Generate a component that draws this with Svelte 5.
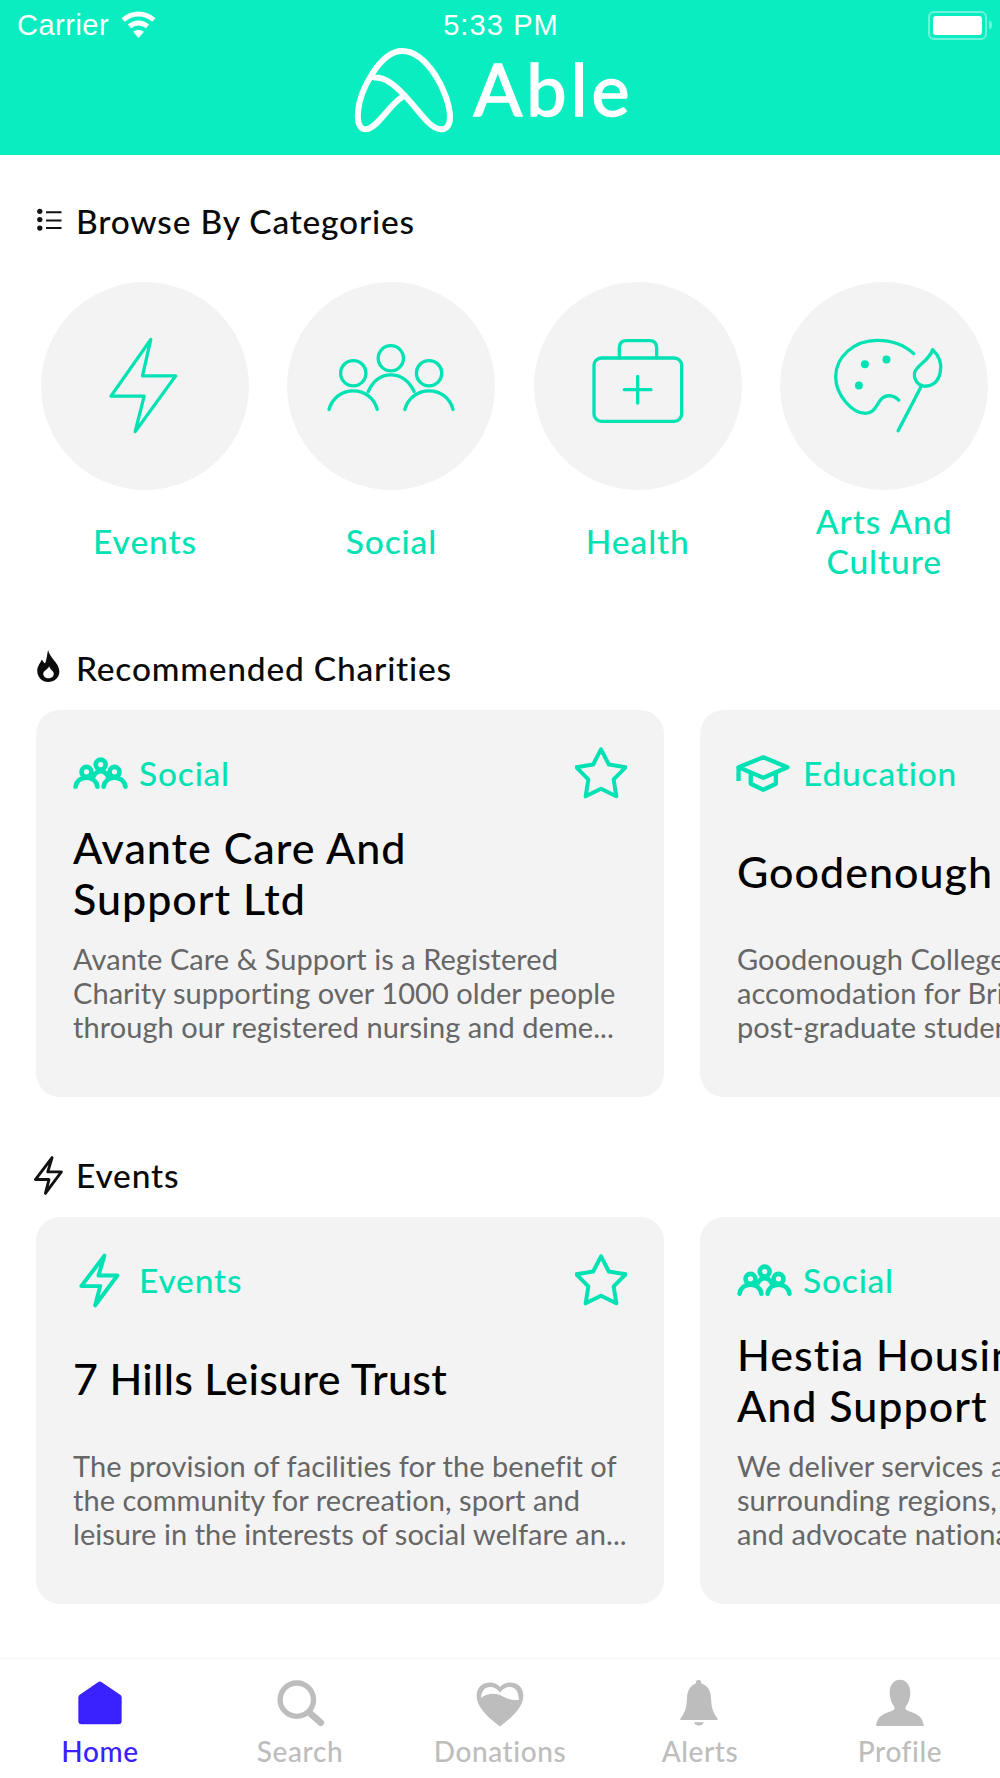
<script>
  const categories = [
    { label: 'Events', icon: 'bolt' },
    { label: 'Social', icon: 'people' },
    { label: 'Health', icon: 'kit' },
    { label: 'Arts And Culture', icon: 'palette' }
  ];
  const sections = [
    {
      title: 'Recommended Charities', icon: 'flame',
      cards: [
        { tag: 'Social', tagIcon: 'people', name: ['Avante Care And', 'Support Ltd'],
          lines: ['Avante Care & Support is a Registered', 'Charity supporting over 1000 older people', 'through our registered nursing and deme...'] },
        { tag: 'Education', tagIcon: 'cap', name: ['Goodenough College'],
          lines: ['Goodenough College provides', 'accomodation for British and overseas', 'post-graduate students in London'] }
      ]
    },
    {
      title: 'Events', icon: 'bolt',
      cards: [
        { tag: 'Events', tagIcon: 'bolt', name: ['7 Hills Leisure Trust'], tight: true,
          lines: ['The provision of facilities for the benefit of', 'the community for recreation, sport and', 'leisure in the interests of social welfare an...'] },
        { tag: 'Social', tagIcon: 'people', name: ['Hestia Housing', 'And Support'],
          lines: ['We deliver services across London and', 'surrounding regions, and we support', 'and advocate nationally for people'] }
      ]
    }
  ];
  const tabs = ['Home', 'Search', 'Donations', 'Alerts', 'Profile'];
</script>

{#snippet smallBolt(cls)}
  <svg class={cls} viewBox="0 0 130 170" fill="none" stroke="currentColor" stroke-width="12" stroke-linejoin="round">
    <path d="M80 10 62 70h57L52 160l15-58H10z" />
  </svg>
{/snippet}

{#snippet smallPeople()}
  <svg class="tag-people" viewBox="0 0 165 100" fill="none" stroke="currentColor" stroke-width="14" stroke-linecap="round">
    <circle cx="83" cy="23" r="15" />
    <circle cx="40" cy="45" r="15" />
    <circle cx="125" cy="45" r="15" />
    <path d="M7 90C10 72 22 63 40 63s30 9 33 27M92 90c3-18 15-27 33-27s30 9 33 27M62 58c5-11 12-15 21-15s16 4 21 15" />
  </svg>
{/snippet}

{#snippet star()}
  <svg class="star" viewBox="0 0 156 156" fill="none" stroke="currentColor" stroke-width="12" stroke-linejoin="round">
    <path d="M78 7 101.500 52.600 152 61 116 97.400 124 148 78 125 32 148 40 97.400 4 61 54.500 52.600Z" />
  </svg>
{/snippet}

<div class="phone">
  <header class="top">
    <div class="status">
      <div class="carrier">
        <span>Carrier</span>
        <svg class="wifi" viewBox="0 0 40 30" fill="none" stroke="#fff" stroke-width="5.500">
          <path d="M3 10C13 1 27 1 37 10M10 17c6-5 14-5 20 0" />
          <path d="M14 23c3-2.500 9-2.500 12 0L20 30z" fill="#fff" stroke="none" />
        </svg>
      </div>
      <span class="time">5:33 PM</span>
      <div class="battery">
        <span class="batt-shell"><span class="batt-fill"></span></span>
        <span class="batt-tip"></span>
      </div>
    </div>
    <div class="brand">
      <svg class="logo" viewBox="40 50 310 262" fill="none" stroke="#fff" stroke-width="18" stroke-linecap="round" stroke-linejoin="round">
        <path d="M188 201C150 222 112 298 78 298 58 298 53 275 55 245 60 180 122 62 188 62 262 62 332 190 332 262 332 284 322 298 305 298 270 298 232 232 190 190 165 165 140 142 105 142" />
      </svg>
      <span class="wordmark">Able</span>
    </div>
  </header>

  <main class="content">
    <div class="section-head first">
      <span class="head-icon">
        <svg class="list" viewBox="0 0 84 76" fill="#111">
          <circle cx="11" cy="10" r="8" /><circle cx="11" cy="35" r="8" /><circle cx="11" cy="61" r="8" />
          <path d="M30 13h47M30 38h47M30 61h47" stroke="#111" stroke-width="6" />
        </svg>
      </span>
      <h2>Browse By Categories</h2>
    </div>

    <div class="categories">
      {#each categories as c}
        <div class="category">
          <div class="circle">
            {#if c.icon === 'bolt'}
              <svg class="i-bolt" viewBox="0 0 220 295" fill="none" stroke="currentColor" stroke-width="10" stroke-linejoin="round"><path d="M132 7 107 117H207L85 285 112 178H12Z" /></svg>
            {:else if c.icon === 'people'}
              <svg class="i-people" viewBox="0 0 400 263" fill="none" stroke="currentColor" stroke-width="10" stroke-linecap="round">
                <circle cx="198" cy="48" r="38" /><circle cx="85" cy="93" r="38" /><circle cx="313" cy="93" r="38" />
                <path d="M12 202C22 168 50 146 85 146s63 22 72 56M240 202c10-34 38-56 73-56s63 22 72 56M130 148c15-33 40-50 68-50s54 17 70 50" />
              </svg>
            {:else if c.icon === 'kit'}
              <svg class="i-kit" viewBox="0 0 285 285" fill="none" stroke="currentColor" stroke-width="10" stroke-linecap="round">
                <rect x="12" y="60" width="263" height="190" rx="22" />
                <path d="M88 60V30Q88 8 110 8H178Q200 8 200 30V60M143 115V195M103 155H183" />
              </svg>
            {:else}
              <svg class="i-palette" viewBox="0 0 364 295" fill="none" stroke="currentColor" stroke-width="10" stroke-linecap="round" stroke-linejoin="round">
                <path d="M270 50C240 22 200 10 160 10 90 10 35 60 35 120 35 175 85 230 125 230 150 230 155 210 170 190 185 170 210 175 225 190" />
                <path d="M327 38C345 55 355 80 350 105 345 135 325 150 300 148 280 145 270 125 272 110 275 85 315 75 327 38Z" />
                <path d="M292 150 223 282" />
                <g fill="currentColor" stroke="none"><circle cx="123" cy="82" r="12" /><circle cx="188" cy="68" r="12" /><circle cx="105" cy="146" r="12" /></g>
              </svg>
            {/if}
          </div>
          <div class="cat-label">{c.label}</div>
        </div>
      {/each}
    </div>

    {#each sections as s}
      <div class="section-head">
        <span class="head-icon">
          {#if s.icon === 'flame'}
            <svg class="flame" viewBox="0 0 72 95">
              <path fill="#0b0b0b" d="M35 5C38 25 65 40 65 62 65 80 50 90 35 90 20 90 6 78 6 60 6 48 14 40 18 30 22 36 25 40 27 40 32 30 32 15 35 5Z" />
              <path fill="#fff" d="M38 48C40 58 50 60 50 68 50 76 43 80 36 80 28 80 22 75 22 68 22 60 33 58 38 48Z" />
            </svg>
          {:else}
            {@render smallBolt('head-bolt')}
          {/if}
        </span>
        <h2>{s.title}</h2>
      </div>
      <div class="cards">
        {#each s.cards as card}
          <article class="card">
            <div class="card-top">
              <div class="tag">
                <span class="tag-icon">
                  {#if card.tagIcon === 'people'}
                    {@render smallPeople()}
                  {:else if card.tagIcon === 'bolt'}
                    {@render smallBolt('tag-bolt')}
                  {:else}
                    <svg class="cap" viewBox="0 0 165 115" fill="none" stroke="currentColor" stroke-width="13" stroke-linejoin="round">
                      <path d="M85 10 158 40 85 72 10 40Z" />
                      <path d="M10 40V82M47 58V90L85 108 123 90V58" />
                    </svg>
                  {/if}
                </span>
                <span>{card.tag}</span>
              </div>
              {@render star()}
            </div>
            <h3 class="name" class:single={card.name.length === 1} class:tight={card.tight}>
              {#each card.name as n}<span>{n}</span>{/each}
            </h3>
            <div class="desc">
              {#each card.lines as l}<div>{l}</div>{/each}
            </div>
          </article>
        {/each}
      </div>
    {/each}
  </main>

  <nav class="tabbar">
    {#each tabs as t, i}
      <div class="tab" class:active={i === 0}>
        <span class="tab-icon">
          {#if i === 0}
            <svg class="t-home" viewBox="0 0 145 140" fill="currentColor" stroke="currentColor" stroke-width="20" stroke-linejoin="round"><path d="M72 14 128 52V123H17V52Z" /></svg>
          {:else if i === 1}
            <svg class="t-search" viewBox="0 0 155 150" fill="none" stroke="currentColor" stroke-linecap="round">
              <circle cx="68" cy="65" r="50" stroke-width="16" /><path d="M106 104 140 134" stroke-width="20" />
            </svg>
          {:else if i === 2}
            <svg class="t-heart" viewBox="0 0 160 150">
              <path fill="currentColor" d="M80 146C50 122 10 92 8 52 8 22 28 10 50 10 62 10 72 15 80 24 88 15 98 10 110 10 132 10 152 22 152 52 150 92 110 122 80 146Z" />
              <path fill="#fff" d="M22 58C22 36 34 24 50 24 62 24 72 30 80 41 88 30 98 24 110 24 126 24 138 36 138 64 118 66 100 60 86 52 68 42 42 42 22 58Z" />
            </svg>
          {:else if i === 3}
            <svg class="t-bell" viewBox="0 0 120 145" fill="currentColor">
              <path d="M57 2C62 0 67 4 66 12 85 18 95 32 96 55 97 85 102 100 116 118V122H4V118C18 100 23 85 24 55 25 32 35 18 51 12 50 6 52 3 57 2Z" />
              <path d="M45 129H74C73 142 47 142 45 129Z" />
            </svg>
          {:else}
            <svg class="t-user" viewBox="0 0 150 145" fill="currentColor">
              <path d="M75 2C93 2 106 16 106 42 106 60 98 76 92 84V92C112 104 144 104 147 142H3C6 104 38 104 58 92V84C52 76 44 60 44 42 44 16 57 2 75 2Z" />
            </svg>
          {/if}
        </span>
        <span class="tab-label">{t}</span>
      </div>
    {/each}
  </nav>
</div>

<style>
  :global(body) { margin: 0; background: #fff; }
  .phone {
    width: 1000px; height: 1778px; overflow: hidden;
    display: flex; flex-direction: column;
    font-family: Lato, "Noto Sans", sans-serif;
    background: #fff;
    color: #000;
  }
  .top { height: 155px; background: #0aedc0; color: #fff; flex: none; }
  .status {
    height: 46px; box-sizing: border-box; padding: 4px 8px 0 17px;
    display: grid; grid-template-columns: 1fr auto 1fr; align-items: center;
    font-family: "Liberation Sans", Arial, sans-serif;
    font-size: 29px;
  }
  .carrier { display: flex; align-items: center; gap: 11px; letter-spacing: .5px; }
  .wifi { width: 37px; height: 27px; margin-top: -2px; }
  .time { letter-spacing: 1.1px; margin-right: 7px; }
  .battery { justify-self: end; display: flex; align-items: center; gap: 2px; }
  .batt-shell { width: 49px; height: 19px; padding: 3px; border: 2px solid rgba(255,255,255,.4); border-radius: 6px; display: block; }
  .batt-fill { display: block; width: 100%; height: 100%; background: #fff; border-radius: 3px; }
  .batt-tip { width: 3px; height: 8px; background: rgba(255,255,255,.4); border-radius: 0 3px 3px 0; }
  .brand { display: flex; justify-content: center; align-items: flex-start; gap: 18px; padding-right: 14px; }
  .logo { width: 103px; height: 87px; display: block; margin-top: 1px; }
  .wordmark { font-size: 72px; line-height: 84px; font-weight: 400; letter-spacing: 4px; -webkit-text-stroke: 1.5px #fff; }

  .content { flex: 1; overflow: hidden; }
  .section-head { display: flex; align-items: center; height: 40px; margin: 56px 0 22px 36px; }
  .section-head.first { margin: 46px 0 41px 36px; }
  .head-icon { width: 40px; display: flex; justify-content: flex-start; flex: none; }
  h2 { margin: 0; font-size: 33.500px; font-weight: 500; line-height: 40px; letter-spacing: .8px; color: #0a0a0a; }
  .list { width: 28px; height: 25px; display: block; margin-top: -2px; }
  .flame { width: 27px; height: 36px; display: block; margin: -4px 0 0 -1px; }
  .head-bolt { width: 31px; height: 41px; display: block; color: #111; margin-left: -3px; }

  .categories { display: flex; gap: 38.400px; padding-left: 41px; }
  .category { width: 208px; flex: none; }
  .circle {
    width: 208px; height: 208px; border-radius: 50%; background: #f3f3f3;
    display: flex; align-items: center; justify-content: center; color: #00e2b3;
  }
  .i-bolt { width: 73px; height: 98px; margin-right: 4px; }
  .i-people { width: 133px; height: 88px; }
  .i-kit { width: 95px; height: 95px; margin-top: -2px; }
  .i-palette { width: 121px; height: 98px; }
  .cat-label {
    height: 102px; box-sizing: border-box; padding: 0 20px 1px;
    display: flex; align-items: center; justify-content: center; text-align: center;
    font-size: 33.500px; line-height: 40px; letter-spacing: .9px; color: #00e2b3;
    font-weight: 500;
  }

  .cards { display: flex; gap: 36px; padding-left: 36px; margin-bottom: 58px; }
  .card {
    width: 628px; height: 387px; box-sizing: border-box; flex: none;
    background: #f3f3f3; border-radius: 24px; padding: 38px 37px 0;
  }
  .card-top { display: flex; justify-content: space-between; align-items: center; height: 50px; color: #00e2b3; }
  .tag { display: flex; align-items: center; font-size: 33.500px; letter-spacing: .8px; font-weight: 500; }
  .tag-icon { width: 66px; display: flex; align-items: center; flex: none; }
  .tag-people { width: 55px; height: 33px; display: block; }
  .tag-bolt { width: 43px; height: 57px; display: block; margin-left: 5px; }
  .cap { width: 55px; height: 38px; display: block; margin-left: -2px; }
  .star { width: 52px; height: 52px; display: block; }
  .name {
    margin: 24px 0 18px; height: 102px; white-space: nowrap;
    display: flex; flex-direction: column; justify-content: center;
    font-size: 43px; line-height: 51px; font-weight: 500; letter-spacing: 1px; color: #000;
  }
  .name.single { padding-bottom: 3px; box-sizing: border-box; }
  .name.tight { letter-spacing: .3px; }
  .desc { font-size: 29px; line-height: 34px; color: #666; white-space: nowrap; letter-spacing: .05px; }

  .tabbar {
    height: 119px; flex: none; display: grid; grid-template-columns: repeat(5, 1fr);
    border-top: 1px solid #f6f6f6; color: #bdbdbd;
  }
  .tab { display: flex; flex-direction: column; align-items: center; }
  .tab.active { color: #3a22ff; }
  .tab-icon { height: 75px; display: flex; align-items: center; justify-content: center; padding-top: 13px; box-sizing: border-box; }
  .tab-label { font-size: 28px; line-height: 34px; font-weight: 500; letter-spacing: .6px; }
  .t-home { width: 48px; height: 47px; }
  .t-search { width: 52px; height: 50px; }
  .t-heart { width: 52px; height: 49px; }
  .t-bell { width: 40px; height: 49px; margin-right: 3px; }
  .t-user { width: 50px; height: 48px; }
</style>
